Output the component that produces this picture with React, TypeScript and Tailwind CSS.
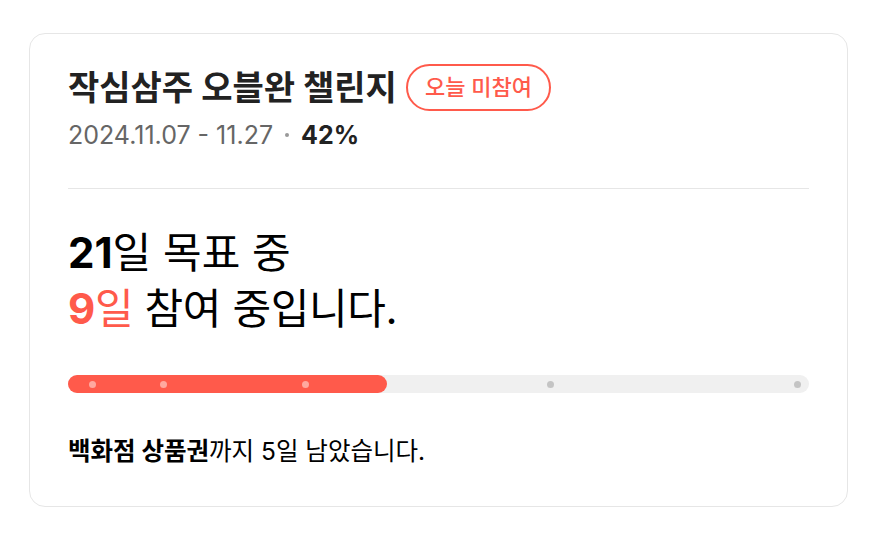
import React from 'react';

const dots = [
    { left: 24, done: true },
    { left: 95, done: true },
    { left: 237, done: true },
    { left: 482, done: false },
    { left: 729, done: false },
];

export default function App() {
    return (
        <div className="min-h-screen bg-white pt-[33px] px-[29px] font-['Inter','Noto_Sans_CJK_KR',sans-serif]">
            <section className="w-[819px] rounded-2xl border border-[#e6e6e6] px-[38px] pt-[30px] pb-[41px]">
                <div className="flex items-center gap-[9px]">
                    <h1 className="text-[34px] leading-[44px] font-bold text-[#222]">작심삼주 오블완 챌린지</h1>
                    <span className="flex h-[47px] items-center rounded-full border-2 border-[#ff5a4b] px-[17px] text-[22px] font-medium text-[#ff5a4b]">
                        오늘 미참여
                    </span>
                </div>
                <div className="mt-[10px] flex items-center text-[25px] leading-[28px] text-[#666]">
                    <span>2024.11.07 - 11.27</span>
                    <span className="mx-[12px] h-[4px] w-[4px] rounded-full bg-[#999]" />
                    <span className="font-bold text-[#222]">42%</span>
                </div>
                <div className="mt-[39px] h-px bg-[#e6e6e6]" />
                <div className="mt-[36px] text-[42px] leading-[56px] text-black">
                    <p><span className="font-bold">21</span>일 목표 중</p>
                    <p className="tracking-[-0.4px]"><span className="text-[#ff5a4b]"><span className="font-bold">9</span>일</span> 참여 중입니다.</p>
                </div>
                <div className="relative mt-[38px] h-[18px] rounded-full bg-[#f0f0f0]">
                    <div className="h-full w-[43%] rounded-full bg-[#ff5a4b]" />
                    {dots.map((d, i) => (
                        <span
                            key={i}
                            className={
                                'absolute top-[6px] h-[7px] w-[7px] rounded-full ' +
                                (d.done ? 'bg-[#ffa89f]' : 'bg-[#c4c4c4]')
                            }
                            style={{ left: d.left - 3 }}
                        />
                    ))}
                </div>
                <p className="mt-[44px] text-[24.5px] leading-[28px] text-black">
                    <span className="font-bold">백화점 상품권</span>까지 5일 남았습니다.
                </p>
            </section>
        </div>
    );
}
